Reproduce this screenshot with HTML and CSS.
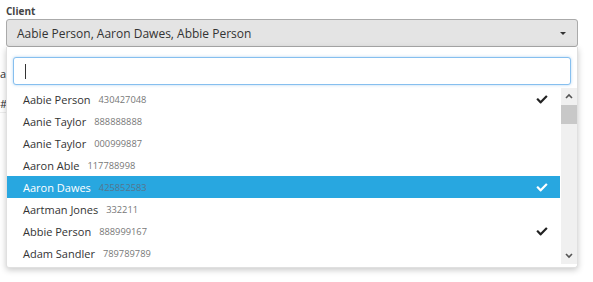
FILE: index.html
```html
<!DOCTYPE html>
<html lang="en">
  <head>
    <meta charset="UTF-8" />
    <meta name="viewport" content="width=device-width, initial-scale=1.0" />
    <title>Client picker</title>
    <link rel="stylesheet" href="styles.css">
  </head>
  <body>
    <div class="field">
      <label class="field-label">Client</label>
      <div class="select">
        <span class="select-value">Aabie Person, Aaron Dawes, Abbie Person</span>
        <span class="select-arrow"></span>
      </div>

      <!-- form content underneath the open dropdown -->
      <div class="behind">
        <div class="behind-row">a,</div>
        <div class="behind-row">#</div>
      </div>

      <div class="dropdown">
        <div class="search">
          <input class="search-input" type="text" autofocus>
          <span class="caret"></span>
        </div>
        <div class="results">
          <ul class="options">
            <li class="option selected">
              <span class="name">Aabie Person</span><span class="num">430427048</span>
              <svg class="check" viewBox="0 0 512 512"><path d="M173.9 439.4l-166.4-166.4c-10-10-10-26.2 0-36.2l36.2-36.2c10-10 26.2-10 36.2 0L192 312.7 432.1 72.6c10-10 26.2-10 36.2 0l36.2 36.2c10 10 10 26.2 0 36.2l-294.4 294.4c-10 10-26.2 10-36.2 0z"/></svg>
            </li>
            <li class="option">
              <span class="name">Aanie Taylor</span><span class="num">888888888</span>
            </li>
            <li class="option">
              <span class="name">Aanie Taylor</span><span class="num">000999887</span>
            </li>
            <li class="option">
              <span class="name">Aaron Able</span><span class="num">117788998</span>
            </li>
            <li class="option selected active">
              <span class="name">Aaron Dawes</span><span class="num">425852583</span>
              <svg class="check" viewBox="0 0 512 512"><path d="M173.9 439.4l-166.4-166.4c-10-10-10-26.2 0-36.2l36.2-36.2c10-10 26.2-10 36.2 0L192 312.7 432.1 72.6c10-10 26.2-10 36.2 0l36.2 36.2c10 10 10 26.2 0 36.2l-294.4 294.4c-10 10-26.2 10-36.2 0z"/></svg>
            </li>
            <li class="option">
              <span class="name">Aartman Jones</span><span class="num">332211</span>
            </li>
            <li class="option selected">
              <span class="name">Abbie Person</span><span class="num">888999167</span>
              <svg class="check" viewBox="0 0 512 512"><path d="M173.9 439.4l-166.4-166.4c-10-10-10-26.2 0-36.2l36.2-36.2c10-10 26.2-10 36.2 0L192 312.7 432.1 72.6c10-10 26.2-10 36.2 0l36.2 36.2c10 10 10 26.2 0 36.2l-294.4 294.4c-10 10-26.2 10-36.2 0z"/></svg>
            </li>
            <li class="option">
              <span class="name">Adam Sandler</span><span class="num">789789789</span>
            </li>
          </ul>
          <div class="scrollbar">
            <svg class="scroll-arrow" viewBox="0 0 16 17"><path d="M5 10 L8 7 L11 10" /></svg>
            <div class="scroll-track">
              <div class="scroll-thumb"></div>
            </div>
            <svg class="scroll-arrow" viewBox="0 0 16 17"><path d="M5 7 L8 10 L11 7" /></svg>
          </div>
        </div>
      </div>
    </div>
  </body>
</html>
```

FILE: styles.css
```css
html, body {
  height: 100%;
}
body {
  font-family: "Open Sans", Arial, sans-serif;
  margin: 0;
  padding: 0;
  background-color: #fff;
  color: #333;
}
.field {
  position: relative;
  padding: 4px 15px 0 6px;
}
.field-label {
  display: block;
  font-size: 10px;
  font-weight: bold;
  color: #444;
  line-height: 14px;
  margin-bottom: 1px;
}
.select {
  display: flex;
  align-items: center;
  height: 26px;
  padding: 0 10px;
  background-color: #e4e4e4;
  border: 1px solid #aaa;
  border-radius: 3px;
}
.select-value {
  flex: 1;
  font-size: 12px;
}
.select-arrow {
  width: 0;
  height: 0;
  margin-right: 1px;
  border-left: 3px solid transparent;
  border-right: 3px solid transparent;
  border-top: 3px solid #333;
}
.behind {
  margin-left: -6px;
  padding-top: 20px;
  font-size: 11px;
  color: #333;
}
.behind-row {
  height: 30px;
  line-height: 14px;
}
.behind-row + .behind-row {
  border-bottom: 1px solid #eee;
  height: 15px;
}
.dropdown {
  position: absolute;
  left: 6px;
  right: 15px;
  top: 47px;
  background: #fff;
  border: 1px solid #e0e0e0;
  border-top: none;
  border-radius: 0 0 3px 3px;
  box-shadow: 0 2px 6px rgba(0, 0, 0, 0.22);
}
.search {
  position: relative;
  padding: 10px 6px 2px 6px;
}
.search-input {
  box-sizing: border-box;
  width: 100%;
  height: 28px;
  margin: 0;
  padding: 0 11px;
  font-family: inherit;
  font-size: 13px;
  border: 1px solid #86bfef;
  border-radius: 3px;
  outline: none;
  box-shadow: 0 0 3px rgba(100, 170, 230, 0.5);
  caret-color: #333;
}
.caret {
  position: absolute;
  left: 18px;
  top: 17px;
  width: 1px;
  height: 15px;
  background-color: #333;
}
.results {
  display: flex;
  height: 176px;
  margin-top: 1px;
  margin-bottom: 3px;
}
.options {
  flex: 1;
  list-style: none;
  margin: 0;
  padding: 0;
}
.option {
  display: flex;
  align-items: center;
  height: 22px;
  padding: 0 12px 0 16px;
}
.name {
  font-size: 11px;
  color: #333;
}
.num {
  font-size: 9.3px;
  color: #777;
  margin-left: 8px;
}
.check {
  margin-left: auto;
  width: 12px;
  height: 11px;
  fill: #222;
}
.option.active {
  background-color: #28a7e0;
}
.option.active .name {
  color: #fff;
}
.option.active .num {
  color: #55758e;
}
.option.active .check {
  fill: #fff;
}
.scrollbar {
  display: flex;
  flex-direction: column;
  width: 16px;
  margin-left: 1px;
  background-color: #f0f0f0;
}
.scroll-arrow {
  width: 16px;
  height: 17px;
  fill: none;
  stroke: #555;
  stroke-width: 1.6;
}
.scroll-track {
  flex: 1;
}
.scroll-thumb {
  height: 19px;
  background-color: #c8c8c8;
}
```
